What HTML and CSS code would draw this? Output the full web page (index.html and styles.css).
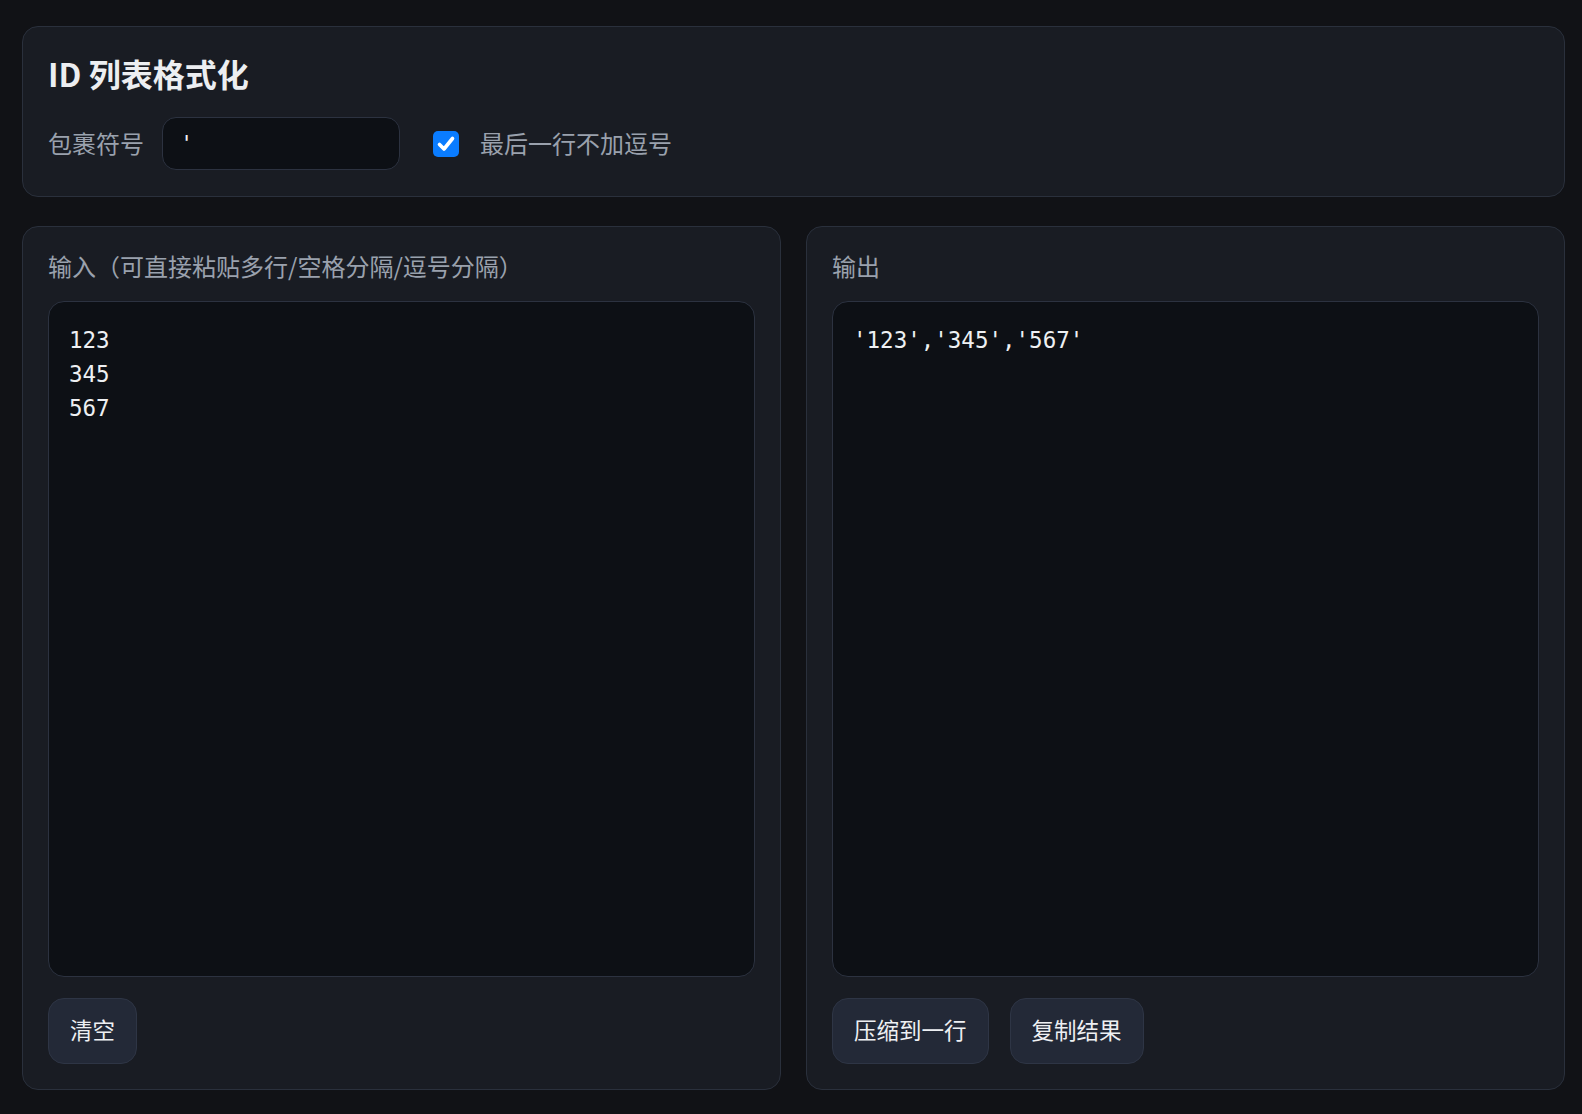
FILE: index.html
```html
<!DOCTYPE html>
<html lang="zh-CN">
<head>
<meta charset="utf-8">
<title>ID 列表格式化</title>
<link rel="stylesheet" href="styles.css">
</head>
<body>
<div class="page">
  <section class="card top">
    <h1 class="title">ID 列表格式化</h1>
    <div class="options">
      <label class="opt-label" for="wrap">包裹符号</label>
      <input id="wrap" class="wrap-input" type="text" value="'">
      <span class="check" aria-hidden="true">
        <svg width="26" height="26" viewBox="0 0 26 26"><rect width="26" height="26" rx="5" fill="#0a7cff"/><path d="M6.5 13.5 L11 18 L19.5 7.5" fill="none" stroke="#fff" stroke-width="3.6" stroke-linecap="round" stroke-linejoin="round"/></svg>
      </span>
      <span class="opt-label check-label">最后一行不加逗号</span>
    </div>
  </section>
  <div class="panes">
    <section class="card pane">
      <div class="pane-label">输入（可直接粘贴多行/空格分隔/逗号分隔）</div>
      <textarea class="code">123
345
567</textarea>
      <div class="actions">
        <button class="btn">清空</button>
      </div>
    </section>
    <section class="card pane">
      <div class="pane-label">输出</div>
      <textarea class="code" readonly>'123','345','567'</textarea>
      <div class="actions">
        <button class="btn">压缩到一行</button>
        <button class="btn">复制结果</button>
      </div>
    </section>
  </div>
</div>
</body>
</html>
```
FILE: styles.css
```css
* { box-sizing: border-box; }
html, body {
  margin: 0;
  height: 100%;
  background: #111216;
}
body {
  font-family: "Noto Sans CJK SC", "Noto Sans", sans-serif;
  color: #e6e8ec;
}
.page {
  height: 100vh;
  padding: 26px 17px 24px 22px;
  display: flex;
  flex-direction: column;
  gap: 29px;
}
.card {
  background: #191c23;
  border: 1.5px solid #2a303c;
  border-radius: 16px;
  padding: 24px 25px 25px 25px;
}
.top {
  flex: none;
  padding-bottom: 26px;
}
.title {
  margin: 0 0 22px 0;
  font-size: 32px;
  font-weight: 700;
  line-height: 44px;
  color: #eceef1;
  letter-spacing: 0;
}
.options {
  display: flex;
  align-items: center;
  height: 53px;
}
.opt-label {
  font-size: 24px;
  color: #9aa1ad;
  line-height: 30px;
  padding-bottom: 2px;
}
.wrap-input {
  margin-left: 18px;
  width: 238px;
  height: 53px;
  background: #0d1015;
  border: 1.5px solid #2c3240;
  border-radius: 14px;
  color: #eef0f3;
  font-family: "DejaVu Sans Mono", monospace;
  font-size: 22px;
  padding: 0 17px;
  outline: none;
}
.check {
  margin-left: 33px;
  width: 26px;
  height: 26px;
  display: flex;
}
.check-label {
  margin-left: 21px;
}
.panes {
  flex: 1;
  min-height: 0;
  display: grid;
  grid-template-columns: 1fr 1fr;
  gap: 25px;
}
.pane {
  display: flex;
  flex-direction: column;
  min-height: 0;
}
.pane-label {
  font-size: 24px;
  line-height: 30px;
  color: #9aa1ad;
  margin-bottom: 20px;
}
.code {
  flex: 1;
  min-height: 0;
  width: 100%;
  resize: none;
  background: #0d1015;
  border: 1.5px solid #2c3240;
  border-radius: 16px;
  color: #eef0f3;
  font-family: "DejaVu Sans Mono", monospace;
  font-size: 22.5px;
  line-height: 34px;
  padding: 21px 20px;
  outline: none;
  margin: 0;
}
.actions {
  display: flex;
  gap: 21px;
  margin-top: 21px;
}
.btn {
  height: 66px;
  padding: 0 21px 5px;
  background: #232937;
  border: 1.5px solid #2e3545;
  border-radius: 16px;
  color: #eef0f3;
  font-family: "Noto Sans CJK SC", sans-serif;
  font-size: 22.5px;
  line-height: 30px;
  cursor: pointer;
}
```
